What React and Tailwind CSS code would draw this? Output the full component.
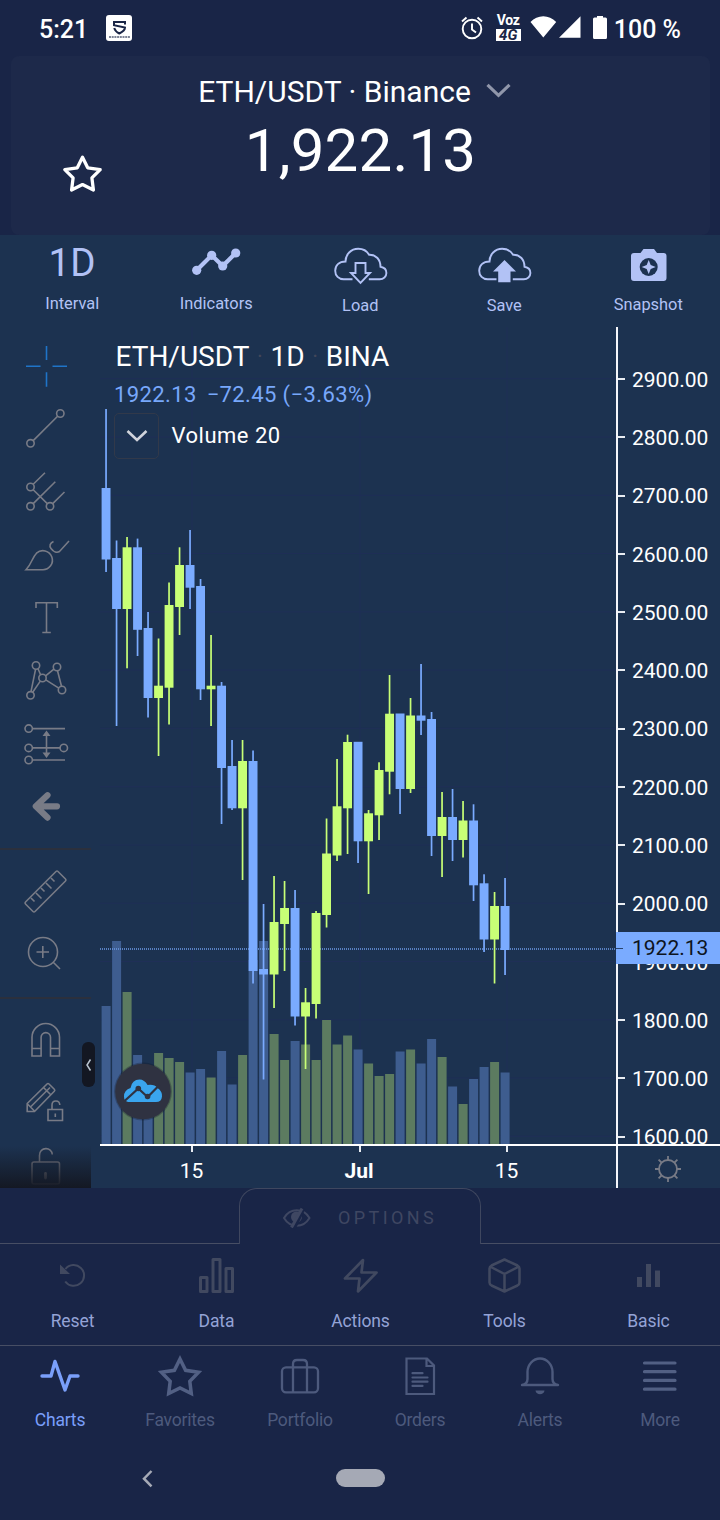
import React from "react";

// [wick top, body top, body bottom, wick bottom, rising, volume top]
const CANDLES = [
  [409, 488, 559.5, 572, 0, 1006],
  [540.5, 558, 609, 726, 0, 941],
  [537, 547.3, 609, 668.3, 1, 992],
  [538.6, 547.3, 629.8, 656, 0, 1055],
  [612, 628, 698, 717.5, 0, 1066],
  [638.5, 685.7, 698, 756, 1, 1053],
  [582.5, 605, 687.7, 724.5, 1, 1058],
  [547.3, 565, 607, 635, 1, 1062],
  [530, 565, 587.7, 609, 0, 1072.5],
  [579, 586, 689.3, 700, 0, 1069],
  [635, 685.7, 689.3, 726, 1, 1077.5],
  [682, 685.7, 768, 824, 0, 1051],
  [740, 766, 808.3, 810, 0, 1084.5],
  [740, 761, 808.3, 880, 1, 1055],
  [750.5, 761, 971, 983.5, 0, 960],
  [904, 969, 974.5, 1079.5, 0, 941],
  [876, 922, 974.5, 1008, 1, 1034],
  [881, 908, 924, 971, 1, 1060],
  [890, 908, 1016.5, 1025.5, 0, 1041],
  [988, 1002.3, 1016.5, 1069, 1, 1044.5],
  [911, 913, 1004, 1018.5, 1, 1060],
  [818.5, 853.5, 915, 927.5, 1, 1020],
  [759, 806.3, 855.5, 861, 1, 1044.5],
  [734.7, 742, 808.3, 854, 1, 1035.5],
  [742, 741.8, 841.3, 863, 0, 1049.5],
  [810, 813.3, 841.3, 894, 1, 1063.5],
  [762.3, 770, 815.3, 840, 1, 1076],
  [675, 713.7, 771.7, 794.3, 1, 1074],
  [714, 713.5, 789, 814, 0, 1051.5],
  [698, 715.5, 789, 793, 1, 1049.5],
  [664, 715.5, 720.7, 735, 0, 1063.5],
  [712, 719, 836, 856, 0, 1039],
  [792, 817, 836, 877, 1, 1057],
  [789, 817, 840, 861, 0, 1086.5],
  [801, 820.5, 840, 857.5, 1, 1104],
  [804.3, 820.5, 885.3, 901, 0, 1079],
  [874.3, 883.3, 939.5, 952, 0, 1067],
  [892, 906, 939.5, 983.5, 1, 1062],
  [878, 906, 950, 975, 0, 1072.5],
];
const PRICES = ["2900.00", "2800.00", "2700.00", "2600.00", "2500.00", "2400.00", "2300.00", "2200.00", "2100.00", "2000.00", "1900.00", "1800.00", "1700.00", "1600.00"];

function Art({ x, y, w, h, children, ...rest }) {
  return (
    <svg width={w} height={h} viewBox={`${x} ${y} ${w} ${h}`} fill="none" stroke="currentColor" className="block shrink-0" {...rest}>
      {children}
    </svg>
  );
}

function StatusBar() {
  return (
    <div className="flex h-[56px] items-center pr-[39px] pl-[39px] text-[25px] font-medium">
      <span className="w-[67px] pt-[2px] leading-[57px]">5:21</span>
      <Art x={106} y={0} w={27} h={56}>
        <rect x="106" y="15" width="26" height="26" rx="3" fill="#fff" stroke="none" />
        <path d="M125 24.500V22H114v3.200l11 2.300c0 2.500-2.500 4.500-5.700 6-2.500-1.200-4.300-3-5.100-5.500" stroke="#1a2546" strokeWidth="2" />
        <path d="M109 37h21" stroke="#1a2546" strokeWidth="1.500" strokeDasharray="2 .7" opacity=".75" />
      </Art>
      <div className="ml-auto flex items-center">
        <Art x={461} y={0} w={34} h={56}>
          <circle cx="472" cy="29" r="9.300" strokeWidth="1.900" />
          <path d="M472 23.500v6l4 3M462 21.500l4.500-4M482 21.500l-4.500-4" strokeWidth="1.900" />
        </Art>
        <div className="flex h-[56px] w-[28px] flex-col items-center pt-[13px] pr-[1px] font-bold">
          <span className="text-[14px] leading-[14px] tracking-[-0.300px]">Voz</span>
          <span className="mt-[2px] h-[12px] w-[25px] bg-white text-center text-[15px] leading-[13px] text-[#1a2546] italic">4G</span>
        </div>
        <Art x={522.5} y={0} w={91} h={56} stroke="none" fill="#fff">
          <path d="M542.800 37.500L530 22c3.500-3.700 8-5.800 12.800-5.800S552 18.300 555.700 22ZM558.500 37.800H580V16.300ZM594 17.500H596.500V16h6v1.500h2.500a1.500 1.500 0 0 1 1.500 1.500v18.500a1.500 1.500 0 0 1-1.500 1.500h-11a1.500 1.500 0 0 1-1.500-1.500V19a1.500 1.500 0 0 1 1.500-1.500Z" />
        </Art>
        <span className="pt-[2px] leading-[57px]">100 %</span>
      </div>
    </div>
  );
}

function Header() {
  return (
    <header className="mx-[11px] mr-[10px] grid h-[179px] grid-cols-[140px_1fr_140px] rounded-[8px] bg-[#1d294a]">
      <Art x={11} y={56} w={140} h={179}>
        <path d="M82.500 157.200l5.200 10.600 12.500 1.900-8.300 8.200 1.500 12.100-10.900-5.400-10.900 5.400 1.500-12.100-8.300-8.200 12.500-1.900Z" strokeWidth="3.300" strokeLinejoin="round" />
      </Art>
      <div className="flex flex-col items-center">
        <div className="flex h-[71px] items-center pr-[12px] text-[30px] whitespace-nowrap">
          <span>ETH/USDT · Binance</span>
          <Art x={471} y={56} w={40} h={71} className="block shrink-0 text-[#9096aa]">
            <path d="M487.500 84.800l11 10.500 11-10.500" strokeWidth="3.200" />
          </Art>
        </div>
        <div className="text-[60px] leading-[47px] tracking-[0.200px]">1,922.13</div>
      </div>
    </header>
  );
}

const CLOUD = "M352.500 279.300h-8.800c-5 0-8.500-3.600-8.500-8.600 0-5.200 3.700-9.200 10.300-9.200 0-7 5.500-12.700 12.700-12.700 4.700 0 8.700 2.200 10.900 6 7-.3 11.400 4.800 11.400 12 3.500.6 5.900 3 5.900 6.200 0 3.700-3 6.300-6.600 6.300h-11";

function ToolbarItem({ label, children }) {
  return (
    <div className="flex w-[144px] flex-col items-center">
      {children}
      <span className="pt-[1px] pl-[0.500px] text-[16.400px] leading-[20px]">{label}</span>
    </div>
  );
}

function Toolbar() {
  return (
    <div className="flex h-[92px] bg-[#1c3250] text-[#b2c2f5]">
      <ToolbarItem label="Interval">
        <span className="h-[58px] text-[38.500px] leading-[56px]">1D</span>
      </ToolbarItem>
      <ToolbarItem label="Indicators">
        <Art x={144} y={235} w={144} h={58}>
          <path d="M196.700 270.300l15-15 11 10.700 13-13" strokeWidth="4.200" />
          <g fill="currentColor" stroke="none">
            <circle cx="196.700" cy="270.300" r="4.600" />
            <circle cx="211.700" cy="255.300" r="4.600" />
            <circle cx="222.700" cy="266" r="4.600" />
            <circle cx="235.700" cy="253" r="4.600" />
          </g>
        </Art>
      </ToolbarItem>
      <ToolbarItem label="Load">
        <Art x={288} y={235} w={144} h={60}>
          <path d={CLOUD} strokeWidth="1.900" />
          <path d="M355.500 263h10v10h4.500l-9.500 9.800-9.500-9.800h4.500Z" strokeWidth="1.900" />
        </Art>
      </ToolbarItem>
      <ToolbarItem label="Save">
        <Art x={288} y={235} w={144} h={60}>
          <path d={CLOUD} strokeWidth="1.900" />
          <path d="M360.500 260l11.500 11.500h-5.500v10.800h-12.300v-10.800H349Z" fill="currentColor" stroke="none" />
        </Art>
      </ToolbarItem>
      <ToolbarItem label="Snapshot">
        <Art x={576} y={235} w={144} h={59}>
          <path d="M634 253h6.500l3-4h10.500l3 4h6.500a3 3 0 0 1 3 3v22a3 3 0 0 1-3 3H634a3 3 0 0 1-3-3v-22a3 3 0 0 1 3-3Z" fill="currentColor" stroke="none" />
          <circle cx="648.700" cy="267" r="9" fill="#1c3250" stroke="none" />
          <path d="M648.700 260l2 5 5 2-5 2-2 5-2-5-5-2 5-2Z" fill="currentColor" stroke="none" />
        </Art>
      </ToolbarItem>
    </div>
  );
}

const c = (cx, cy, r = 3.7) => <circle key={`${cx}-${cy}`} cx={cx} cy={cy} r={r} />;

const TOOLS_A = [
  <path d="M46.500 346v14M46.500 372.300v14.500M26 366.300h14.500M52.500 366.300H67" stroke="#1f74c8" />,
  <g>{c(30.5, 443.3)}{c(60.3, 413.5)}<path d="M33.200 440.600L57.600 416.200" /></g>,
  <g>{c(30.5, 487)}{c(30.5, 506.3)}{c(50, 506.3)}<path d="M33.200 484.300L45 472.700M33.200 489.700L47.300 503.600M33.200 503.600L55.300 481.700M52.700 503.600L64.500 492" /></g>,
  <path d="M26 569.700h16.500a9.500 9.500 0 1 0-6-16.500c-4.500 4.600-4.500 10.300-10.500 16.500ZM53.500 541.500c-3.500 1.500-4.500 4.500-2.500 7 2.500 3.500 6 4.500 8.500 3l9.500-10.500" />,
  <path d="M36 608v-5.300h21.300v5.300M46.500 602.700v29.800M42.300 632.500h8.500" />,
  <g>{c(36, 665.5)}{c(57, 667)}{c(42.5, 678)}{c(30.5, 695.3)}{c(62, 690)}<path d="M35.600 669.200L31 691.600M32.700 692.300l7.600-11.200M38 668.700l2.600 6M45.600 675.900l8.300-6.700M45.800 679.800l13 8.400M57.500 670.700l4 15.600" /></g>,
  <g>{c(28.7, 728.6)}{c(28.7, 747.9)}{c(63.8, 747.9)}{c(28.7, 760)}<path d="M32.400 728.600H65M32.400 747.900h27.700M32.400 760H65M46.500 734v20" /><path d="M46.500 730.500l4 5.500h-8ZM46.500 758l4-5.500h-8Z" fill="currentColor" stroke="none" /></g>,
  <path d="M57 806.300H38M47.500 795.200L35.800 806.300l11.700 11.300" strokeWidth="6.200" strokeLinecap="round" strokeLinejoin="round" />,
];
const TOOLS_B = [
  <path d="M56 871.500q1-1 2 0l7.500 7.500q1 1 0 2L35 911.500q-1 1-2 0L25.500 904q-1-1 0-2ZM31 898l3.500 3.500M36 893l5.500 5.500M41 888l3.500 3.500M46 883l5.500 5.500M51 878l3.500 3.500" />,
  <path d="M57.500 952a14.500 14.500 0 1 1-29 0 14.500 14.500 0 0 1 29 0ZM36.500 952H49M42.800 946v12M53 962l7 7" />,
];
const TOOLS_C = [
  <path d="M32 1056v-18.700a13.700 13.700 0 0 1 27.500 0V1056h-9v-18.700a4.700 4.700 0 0 0-9.400 0V1056ZM32 1048.500h9.100M50.500 1048.500h9" />,
  <path d="M27.200 1111.500v-8L47 1084q1-1 2 0l5.300 5.300q1 1 0 2L34.500 1111.500ZM27.500 1104l7.200 7.200M30.500 1107l19.500-19.500M43.500 1087.500l7.500 7.500M48 1109.500h14.500v11H48ZM52 1109.500v-4.500c0-5 7.500-5.500 7.800 0M55.300 1113.500v3.500" />,
  <g><path d="M34 1162h23.500q2 0 2 2v18q0 2-2 2H34q-2 0-2-2v-18q0-2 2-2ZM39.500 1162v-6.500c0-9 12.500-9 12.800-1" /><path d="M45.500 1173.500v4.500" strokeWidth="2.800" strokeLinecap="round" /></g>,
];

function ToolGroup({ tools, top }) {
  return tools.map((t, i) => (
    <Art key={i} x={0} y={top + i * 63} w={91} h={63} strokeWidth="1.600">
      {t}
    </Art>
  ));
}

function DrawingTools() {
  return (
    <aside className="relative w-[100px] shrink-0 overflow-hidden text-[#787b86]">
      <div className="flex w-[91px] flex-col pt-[7px]">
        <ToolGroup tools={TOOLS_A} top={334} />
        <div className="my-[10px] h-[2px] bg-[#2b303d]" />
        <ToolGroup tools={TOOLS_B} top={860} />
        <div className="mt-[11px] mb-[10px] h-[2px] bg-[#2b303d]" />
        <ToolGroup tools={TOOLS_C} top={1009} />
      </div>
      <div className="absolute bottom-0 left-0 h-[42px] w-[91px] bg-linear-to-b from-[#141823]/0 to-[#141823]" />
      <div className="absolute top-[715px] left-[82px] flex h-[45px] w-[13px] items-center justify-center rounded-[6px] bg-[#131722] text-[#b9c4d0]">
        <Art x={0} y={0} w={8} h={14}>
          <path d="M5.500 1.500L2 7 5.500 12.500" strokeWidth="1.500" />
        </Art>
      </div>
    </aside>
  );
}

function Plot() {
  return (
    <Art x={100} y={327} w={516} h={817} stroke="none">
      <g fill="#1f2f57">
        {PRICES.map((p, i) => (
          <rect key={p} x="100" y={378.2 + i * 58.28} width="516" height="1" />
        ))}
        <rect x="191.500" y="327" width="1" height="817" />
        <rect x="359.500" y="327" width="1" height="817" />
        <rect x="506.500" y="327" width="1" height="817" />
      </g>
      {CANDLES.map(([, , , , up, v], i) => (
        <rect key={i} x={101.6 + i * 10.5} y={v} width="9" height={1144 - v} fill={up ? "#5c7b60" : "#3e5d8f"} />
      ))}
      <path d="M100 949H616" stroke="#6c9be8" strokeWidth="1.500" strokeDasharray="1 1" />
      {CANDLES.map(([wt, bt, bb, wb, up], i) => (
        <g key={i} fill={up ? "#c8ff76" : "#7aabff"}>
          <rect x={105.2 + i * 10.5} y={wt} width="1.700" height={wb - wt} />
          <rect x={101.6 + i * 10.5} y={bt} width="8.900" height={bb - bt} />
        </g>
      ))}
      <circle cx="143" cy="1091.500" r="29" fill="#101828" opacity=".3" />
      <circle cx="143" cy="1091.500" r="27.800" fill="#2f3241" />
      <path d="M128 1102q-4-1-4-5.500 0-6.500 6.500-8.500 1.500-8.500 9-8.500 5 0 8 5.500 7-1 10 3 5 3.500 4.500 8.500-.5 5.500-6 5.500Z" fill="#3aa5ee" />
      <path d="M124 1101.500l14.300-13 9.300 8.500L159.500 1085" stroke="#2f3241" strokeWidth="2.200" />
      <circle cx="138.300" cy="1088.500" r="2.800" fill="#2f3241" />
      <circle cx="147.600" cy="1096.500" r="2.800" fill="#2f3241" />
    </Art>
  );
}

function Legend() {
  return (
    <div className="absolute top-0 left-[14px] flex flex-col whitespace-nowrap">
      <div className="mt-[9px] flex h-[41px] items-center pl-[1.500px] text-[28px]">
        <span>ETH/USDT</span>
        <span className="w-[21.100px] text-center text-[22px] text-[#43475a]">·</span>
        <span>1D</span>
        <span className="w-[21.100px] text-center text-[22px] text-[#43475a]">·</span>
        <span>BINA</span>
      </div>
      <div className="flex h-[35px] items-center gap-[10px] text-[22px] tracking-[0.380px] text-[#78a8fb]">
        <span>1922.13</span>
        <span>−72.45 (−3.63%)</span>
      </div>
      <div className="mt-[1px] flex items-center text-[22px] tracking-[0.500px]">
        <span className="flex h-[46px] w-[45px] items-center justify-center rounded-[5px] border border-[#31394a] text-[#d1d4dc]">
          <Art x={0} y={0} w={22} h={14}>
            <path d="M1.500 2l9.500 9 9.500-9" strokeWidth="2.600" />
          </Art>
        </span>
        <span className="ml-[12.500px] pb-[2px]">Volume 20</span>
      </div>
    </div>
  );
}

function PriceAxis() {
  return (
    <div className="relative w-[104px] border-l-2 border-[#f4f6fa]">
      <div className="flex h-full flex-col overflow-hidden pt-[23px] text-[21px]">
        {PRICES.map((p) => (
          <div key={p} className="flex h-[58.280px] shrink-0 items-center">
            <span className="mr-[7px] h-[2px] w-[7px] bg-[#e8ecf2]" />
            <span className="pt-[3px]">{p}</span>
          </div>
        ))}
      </div>
      <div className="absolute top-[605px] left-[-2px] flex h-[32px] w-[104px] items-center bg-[#7aabff] text-[21px] text-[#0d1420]">
        <span className="mr-[9px] h-[1px] w-[7px] bg-[#28436d]" />
        <span className="pt-px">1922.13</span>
      </div>
    </div>
  );
}

function TimeMark({ children, className }) {
  return (
    <div className={`flex flex-col items-center ${className}`}>
      <span className="h-[6px] w-[2px] shrink-0 bg-[#e8ecf2]" />
      <span className="mr-[1px] shrink-0 leading-[39px]">{children}</span>
    </div>
  );
}

function ChartPanel() {
  return (
    <main className="flex h-[861px] bg-[#1c3250]">
      <DrawingTools />
      <div className="flex flex-1 flex-col">
        <div className="flex h-[817px]">
          <div className="relative w-[516px]">
            <Plot />
            <Legend />
          </div>
          <PriceAxis />
        </div>
        <div className="flex h-[44px] border-t-2 border-white text-[21px]">
          <div className="flex w-[516px]">
            <TimeMark className="w-[184px]">15</TimeMark>
            <TimeMark className="w-[151px] font-bold">Jul</TimeMark>
            <TimeMark className="w-[144px]">15</TimeMark>
          </div>
          <div className="w-[104px] border-l-2 border-[#f4f6fa] text-[#787b86]">
            <Art x={618} y={1146} w={102} h={42} strokeWidth="1.800">
              <circle cx="668" cy="1169" r="9" />
              <path d="M668 1160v-4M668 1178v4M659 1169h-4M677 1169h4M661.600 1162.600l-3-3M674.400 1162.600l3-3M661.600 1175.400l-3 3M674.400 1175.400l3 3" />
            </Art>
          </div>
        </div>
      </div>
    </main>
  );
}

function OptionsTab() {
  return (
    <div className="flex h-[56px] text-[#3f4762]">
      <div className="w-[239px] border-b border-[#474e64]" />
      <div className="flex w-[242px] items-center rounded-t-[18px] border-x border-t border-[#3f475f] text-[18px] tracking-[3.400px]">
        <Art x={240} y={1189} w={97} h={55}>
          <path d="M284 1218c3-5 7.500-7.700 12.800-7.700s9.700 2.700 12.700 7.700c-3 5-7.500 7.700-12.700 7.700s-9.800-2.700-12.800-7.700Z" strokeWidth="2" />
          <circle cx="296.500" cy="1217" r="5.500" fill="currentColor" stroke="none" />
          <path d="M304 1208.500L294 1229" stroke="#192547" strokeWidth="3" />
          <path d="M302 1208.500L291.500 1227.500" strokeWidth="3" />
        </Art>
        <span className="pt-[2px] pl-[1px]">OPTIONS</span>
      </div>
      <div className="flex-1 border-b border-[#474e64]" />
    </div>
  );
}

const ACTIONS = [
  ["Reset", <g strokeWidth="2"><path d="M65.500 1269a10.400 10.400 0 1 1-.3 12.500" /><path d="M60 1264.500v9.500h10Z" fill="currentColor" stroke="none" /></g>],
  ["Data", <path d="M200.500 1277.500h6.500v14h-6.500ZM213 1259.500h7v32h-7ZM226 1268.500h6.500v23H226Z" strokeWidth="3" strokeLinejoin="round" />],
  ["Actions", <path d="M363 1260L345 1278.500H359.500L358 1291.500 376.500 1272.500H361.500Z" strokeWidth="2.700" strokeLinejoin="round" />],
  ["Tools", <path d="M504.500 1259.500l13 6q2 1 2 3v14q0 2-2 3l-13 6-13-6q-2-1-2-3v-14q0-2 2-3ZM490 1266.500l14.500 7.500 14.500-7.500M504.500 1274v17" strokeWidth="2.500" strokeLinejoin="round" />],
  ["Basic", <path d="M637 1277h5v10h-5ZM646 1264h5v23h-5ZM655 1270.500h5V1287h-5Z" fill="currentColor" stroke="none" />],
];

function ActionRow() {
  return (
    <div className="flex h-[102px] border-b border-[#474e64]">
      {ACTIONS.map(([label, art], i) => (
        <div key={label} className="flex w-[144px] flex-col items-center">
          <Art x={i * 144} y={1244} w={144} h={67} className="block shrink-0 text-[#414960]">{art}</Art>
          <span className="pl-[1px] text-[17.500px] leading-[20px] tracking-[-0.100px] text-[#94a3d6]">{label}</span>
        </div>
      ))}
    </div>
  );
}

const NAV = [
  ["Charts", <path d="M42 1376h9l4-14.500 10 28.500 5-14h8" strokeWidth="3.400" strokeLinecap="round" strokeLinejoin="round" />],
  ["Favorites", <path d="M180 1359l5.600 11.300 13 2-8.800 9 1.500 12.200-11.300-5.500-11.300 5.500 1.500-12.200-8.800-9 13-2Z" strokeWidth="3.500" stroke="#526084" />],
  ["Portfolio", <path d="M286 1367.300h28a4 4 0 0 1 4 4v17a4 4 0 0 1-4 4h-28a4 4 0 0 1-4-4v-17a4 4 0 0 1 4-4ZM293 1392v-28q0-4 4-4h6q4 0 4 4v28" strokeWidth="2.300" />],
  ["Orders", <g strokeWidth="2.200"><path d="M406.500 1358.500h20.500l7 7v28.500h-27.500ZM426.500 1359v7h7.500" /><path d="M412.500 1373.200h10M412.500 1377.500h15M412.500 1381.700h15M412.500 1385.900h10" strokeLinecap="round" /></g>],
  ["Alerts", <g><path d="M522 1385q5.500-1 5.500-6v-7a12.500 13.500 0 0 1 25 0v7q0 5 5.500 6Z" strokeWidth="2.400" strokeLinejoin="round" /><path d="M535.500 1390.500h9c-.5 5-8.500 5-9 0Z" fill="currentColor" stroke="none" /></g>],
  ["More", <path d="M644.500 1363h30.500M644.500 1371.700h30.500M644.500 1380.400h30.500M644.500 1389.200h30.500" strokeWidth="3.200" strokeLinecap="round" stroke="#526084" />],
];

function BottomNav() {
  return (
    <nav className="flex h-[92px]">
      {NAV.map(([label, art], i) => (
        <div key={label} className={`flex w-[120px] flex-col items-center ${i === 0 ? "text-[#7a9ffa]" : "text-[#4d5a7d]"}`}>
          <Art x={i * 120} y={1346} w={120} h={64}>{art}</Art>
          <span className="text-[17.500px] leading-[20px] tracking-[-0.200px]">{label}</span>
        </div>
      ))}
    </nav>
  );
}

function SystemNav() {
  return (
    <div className="flex flex-1 items-start">
      <Art x={0} y={1438} w={336} h={82} className="block shrink-0 text-[#a6aab6]">
        <path d="M151.500 1471l-7.500 7.700 7.500 7.700" strokeWidth="2.500" />
      </Art>
      <span className="mt-[31px] h-[18px] w-[49px] rounded-full bg-[#a5a9b5]" />
    </div>
  );
}

export default function App() {
  return (
    <div className="flex h-[1520px] w-[720px] flex-col overflow-hidden bg-[#192547] font-['Roboto',sans-serif] text-white">
      <StatusBar />
      <Header />
      <Toolbar />
      <ChartPanel />
      <OptionsTab />
      <ActionRow />
      <BottomNav />
      <SystemNav />
    </div>
  );
}
